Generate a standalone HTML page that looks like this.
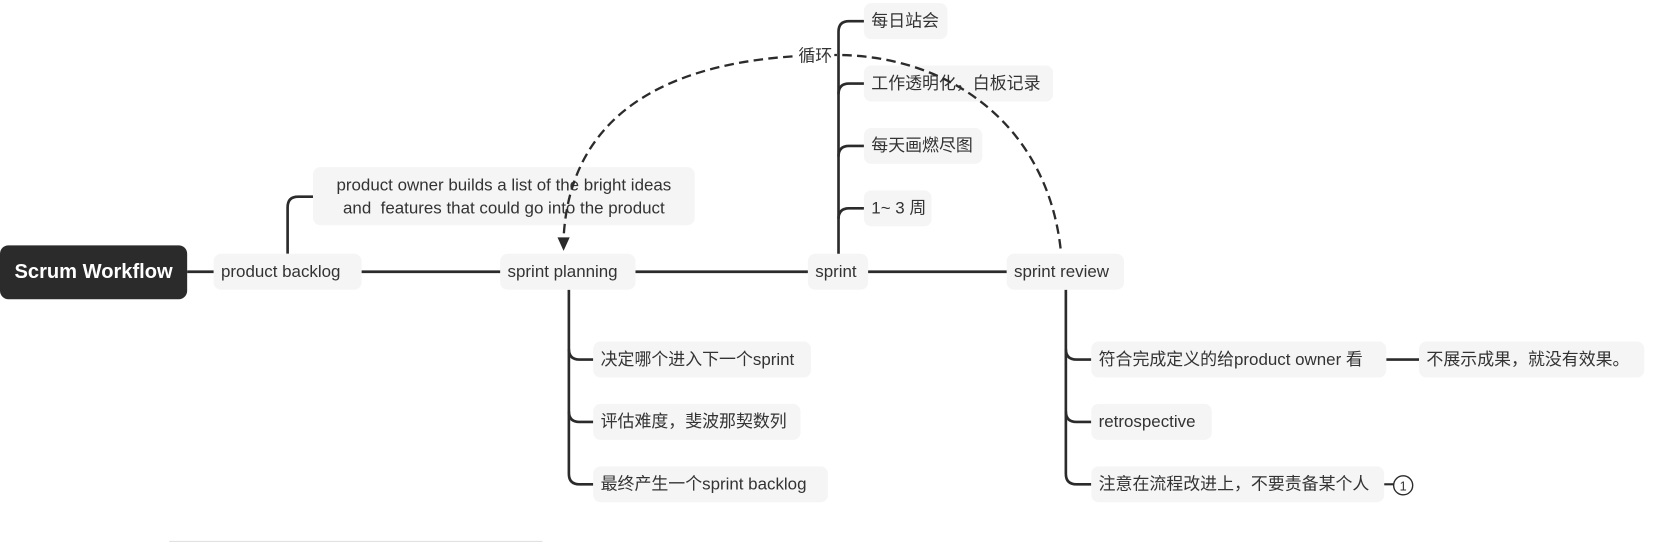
<!DOCTYPE html>
<html><head><meta charset="utf-8"><style>
body{margin:0;width:1658px;height:542px;background:#fff;overflow:hidden;font-family:"Liberation Sans","Noto Sans CJK SC",sans-serif;}
#w{position:absolute;left:0;top:0;width:1568px;height:513px;transform:scale(1.0574);transform-origin:0 0}
.n{position:absolute;background:#f5f5f5;border-radius:7px;color:#333;font-size:16px;height:34px;line-height:35px;padding:0 7px;box-sizing:border-box;white-space:nowrap}
svg{position:absolute;left:0;top:0}
</style></head><body><div id="w">
<svg width="1568" height="513" fill="none" stroke="#2b2b2b" stroke-width="2.5">
<line x1="177" y1="257" x2="1000" y2="257"/>
<path d="M272 240 V196 Q272 186 282 186 H296"/>
<path d="M538 274 V448 Q538 458 548 458 H561"/>
<path d="M538 330 Q538 340 548 340 H561"/>
<path d="M538 389 Q538 399 548 399 H561"/>
<path d="M1008 274 V448 Q1008 458 1018 458 H1032"/>
<path d="M1008 330 Q1008 340 1018 340 H1032"/>
<path d="M1008 389 Q1008 399 1018 399 H1032"/>
<line x1="1311" y1="340" x2="1342" y2="340"/>
<line x1="1309" y1="458" x2="1318" y2="458" stroke-width="2"/>
<circle cx="1327" cy="459" r="9" stroke-width="1.3"/>
<line x1="160" y1="512" x2="513" y2="512" stroke="#ddd" stroke-width="1"/>
<text x="1327" y="464" font-size="12" fill="#333" stroke="none" text-anchor="middle" font-family="Liberation Sans">1</text>
</svg>
<div style="position:absolute;left:0;top:232px;width:177px;height:51px;background:#2b2b2b;border-radius:8px;color:#fff;font-weight:bold;font-size:19px;line-height:51px;text-align:center">Scrum Workflow</div>
<div class="n" style="left:202px;top:240px;width:140px">product backlog</div>
<div class="n" style="left:296px;top:158px;width:361px;height:55px;line-height:22px;padding-top:7px;text-align:center;white-space:pre">product owner builds a list of the bright ideas
and  features that could go into the product</div>
<div class="n" style="left:473px;top:240px;width:128px">sprint planning</div>
<div class="n" style="left:764px;top:240px;width:57px">sprint</div>
<div class="n" style="left:952px;top:240px;width:111px">sprint review</div>
<div class="n" style="left:817px;top:3px;width:79px">每日站会</div>
<div class="n" style="left:817px;top:62px;width:179px">工作透明化，白板记录</div>
<div class="n" style="left:817px;top:121px;width:112px">每天画燃尽图</div>
<div class="n" style="left:817px;top:180px;width:64px">1~ 3 周</div>
<div class="n" style="left:561px;top:323px;width:206px">决定哪个进入下一个sprint</div>
<div class="n" style="left:561px;top:382px;width:196px">评估难度，斐波那契数列</div>
<div class="n" style="left:561px;top:441px;width:222px">最终产生一个sprint backlog</div>
<div class="n" style="left:1032px;top:323px;width:279px">符合完成定义的给product owner 看</div>
<div class="n" style="left:1032px;top:382px;width:114px">retrospective</div>
<div class="n" style="left:1032px;top:441px;width:277px">注意在流程改进上，不要责备某个人</div>
<div class="n" style="left:1342px;top:323px;width:213px">不展示成果，就没有效果。</div>
<svg width="1568" height="513" fill="none" stroke="#2b2b2b" stroke-width="2.2">
<path d="M1003 235 C990 120 900 52 790 52 C660 52 540 90 533 225" stroke-dasharray="9 5"/>
<path d="M528 225 L533 236 L538 225 Z" fill="#2b2b2b" stroke-width="1"/>
</svg>
<div style="position:absolute;left:753px;top:44px;font-size:16px;color:#333;background:#fff;padding:0 2px;line-height:20px">循环</div>
<svg width="1568" height="513" fill="none" stroke="#2b2b2b" stroke-width="2.5">
<path d="M793 240 V30 Q793 20 803 20 H817"/>
<path d="M793 89 Q793 79 803 79 H817"/>
<path d="M793 148 Q793 138 803 138 H817"/>
<path d="M793 207 Q793 197 803 197 H817"/>
</svg>
</div></body></html>
